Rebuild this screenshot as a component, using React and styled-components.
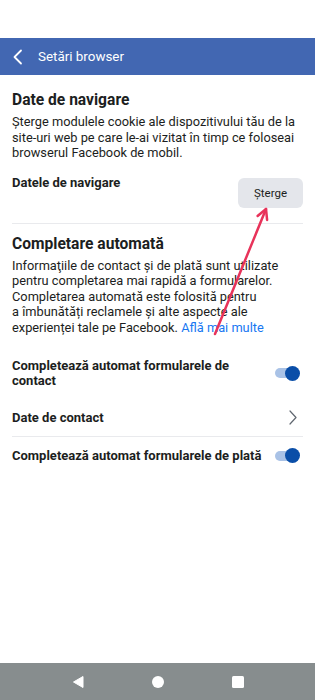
import React from 'react'
import styled, { createGlobalStyle } from 'styled-components'

const GlobalStyle = createGlobalStyle`
  html, body {
    margin: 0;
    padding: 0;
    background: #ffffff;
  }
  body {
    font-family: Roboto, "Noto Sans", "Liberation Sans", sans-serif;
    color: #1c1e21;
  }
`

const Screen = styled.div`
  position: relative;
  width: 315px;
  height: 700px;
  display: flex;
  flex-direction: column;
  overflow: hidden;
  background: #fff;
`

const StatusBar = styled.div`
  height: 38px;
  flex-shrink: 0;
`

const Header = styled.header`
  height: 37px;
  flex-shrink: 0;
  background: #4267b2;
  display: flex;
  align-items: center;
  padding: 0 0 0 12px;
  gap: 14px;
`

const BackButton = styled.svg`
  width: 12px;
  height: 16px;
  display: block;
`

const Title = styled.h1`
  margin: 0;
  font-size: 13.4px;
  font-weight: 400;
  color: #fff;
`

const Content = styled.main`
  flex: 1;
  padding: 15px 12px 0;
`

const Section = styled.section`
  border-bottom: ${props => props.divided ? '1px solid #e9eaed' : 'none'};
  padding-bottom: ${props => props.divided ? '15px' : '0'};
  margin-bottom: ${props => props.divided ? '10px' : '0'};
`

const Heading = styled.h2`
  margin: 0;
  font-size: 15.6px;
  line-height: 20px;
  font-weight: 700;
  color: #1c1e21;
`

const Paragraph = styled.p`
  margin: 4px 0 0;
  font-size: 12.8px;
  line-height: 15.5px;
  color: #1c1e21;
`

const Line = styled.span`
  display: block;
  white-space: nowrap;
`

const Link = styled.a`
  color: #1877f2;
  text-decoration: none;
`

const ActionRow = styled.div`
  display: flex;
  justify-content: space-between;
  align-items: flex-start;
  margin-top: 13px;
`

const RowLabel = styled.span`
  font-size: 13px;
  line-height: ${props => props.tight ? '15px' : '17px'};
  font-weight: 700;
  color: #1c1e21;
`

const ClearButton = styled.button`
  margin-top: 4px;
  width: 65px;
  height: 30px;
  border: none;
  border-radius: 6px;
  background: #e4e6eb;
  color: #1c1e21;
  font-family: inherit;
  font-size: 11.5px;
  padding: 0;
`

const List = styled.div`
  margin-top: 12px;
  display: flex;
  flex-direction: column;
`

const ListRow = styled.div`
  display: flex;
  align-items: center;
  justify-content: space-between;
  gap: 12px;
  padding: 11px 0;
  border-bottom: ${props => props.divided ? '1px solid #e9eaed' : 'none'};
`

const Toggle = styled.span`
  position: relative;
  flex-shrink: 0;
  width: 25px;
  height: 15px;
  margin-right: 3px;
  display: flex;
  align-items: center;

  &::before {
    content: '';
    display: block;
    width: 23px;
    height: 10px;
    border-radius: 5px;
    background: #a9c2e6;
  }

  &::after {
    content: '';
    position: absolute;
    right: 0;
    top: 0;
    width: 15px;
    height: 15px;
    border-radius: 50%;
    background: #0a4ea8;
  }
`

const Chevron = styled.svg`
  width: 8px;
  height: 15px;
  margin-right: 6px;
  display: block;
`

const NavBar = styled.nav`
  height: 37px;
  flex-shrink: 0;
  background: #878d8e;
  display: flex;
  align-items: center;
  justify-content: center;
  gap: 66px;
`

const NavIcon = styled.svg`
  width: 14px;
  height: 14px;
  display: block;
`

const Annotation = styled.svg`
  position: absolute;
  left: 0;
  top: 0;
  pointer-events: none;
`

const Toggleable = ({ children }) => (
  <ListRow>
    <RowLabel tight>{children}</RowLabel>
    <Toggle />
  </ListRow>
)

const App = () => {
  return (
    <>
      <GlobalStyle />
      <Screen>
        <StatusBar />
        <Header>
          <BackButton viewBox="0 0 12 16">
            <polyline points="9,1.5 2.5,8 9,14.5" fill="none" stroke="#fff" strokeWidth="1.8" strokeLinecap="round" strokeLinejoin="round" />
          </BackButton>
          <Title>Setări browser</Title>
        </Header>

        <Content>
          <Section divided>
            <Heading>Date de navigare</Heading>
            <Paragraph>
              <Line>Șterge modulele cookie ale dispozitivului tău de la</Line>
              <Line>site-uri web pe care le-ai vizitat în timp ce foloseai</Line>
              <Line>browserul Facebook de mobil.</Line>
            </Paragraph>
            <ActionRow>
              <RowLabel>Datele de navigare</RowLabel>
              <ClearButton>Șterge</ClearButton>
            </ActionRow>
          </Section>

          <Section>
            <Heading>Completare automată</Heading>
            <Paragraph>
              <Line>Informaţiile de contact și de plată sunt utilizate</Line>
              <Line>pentru completarea mai rapidă a formularelor.</Line>
              <Line>Completarea automată este folosită pentru</Line>
              <Line>a îmbunătăți reclamele și alte aspecte ale</Line>
              <Line>experienței tale pe Facebook. <Link href="#">Află mai multe</Link></Line>
            </Paragraph>
          </Section>

          <List>
            <Toggleable>Completează automat formularele de contact</Toggleable>
            <ListRow divided>
              <RowLabel tight>Date de contact</RowLabel>
              <Chevron viewBox="0 0 8 15">
                <polyline points="1,1 7,7.5 1,14" fill="none" stroke="#606770" strokeWidth="1.2" strokeLinecap="round" strokeLinejoin="round" />
              </Chevron>
            </ListRow>
            <Toggleable>Completează automat formularele de plată</Toggleable>
          </List>
        </Content>

        <NavBar>
          <NavIcon viewBox="0 0 14 14">
            <path d="M12 1.5 L12 12.5 L2.5 7 Z" fill="#fff" stroke="#fff" strokeWidth="1" strokeLinejoin="round" />
          </NavIcon>
          <NavIcon viewBox="0 0 14 14">
            <circle cx="7" cy="7" r="6" fill="#fff" />
          </NavIcon>
          <NavIcon viewBox="0 0 14 14">
            <rect x="1" y="1" width="12" height="12" rx="1.5" fill="#fff" />
          </NavIcon>
        </NavBar>

        <Annotation width="315" height="700" viewBox="0 0 315 700">
          <g stroke="#e8335a" strokeWidth="2.5" strokeLinecap="round" fill="none">
            <line x1="215" y1="334" x2="266" y2="209" />
            <polyline points="257.6,216 266,209 267.1,219.9" strokeLinejoin="round" />
          </g>
        </Annotation>
      </Screen>
    </>
  )
}

export default App
